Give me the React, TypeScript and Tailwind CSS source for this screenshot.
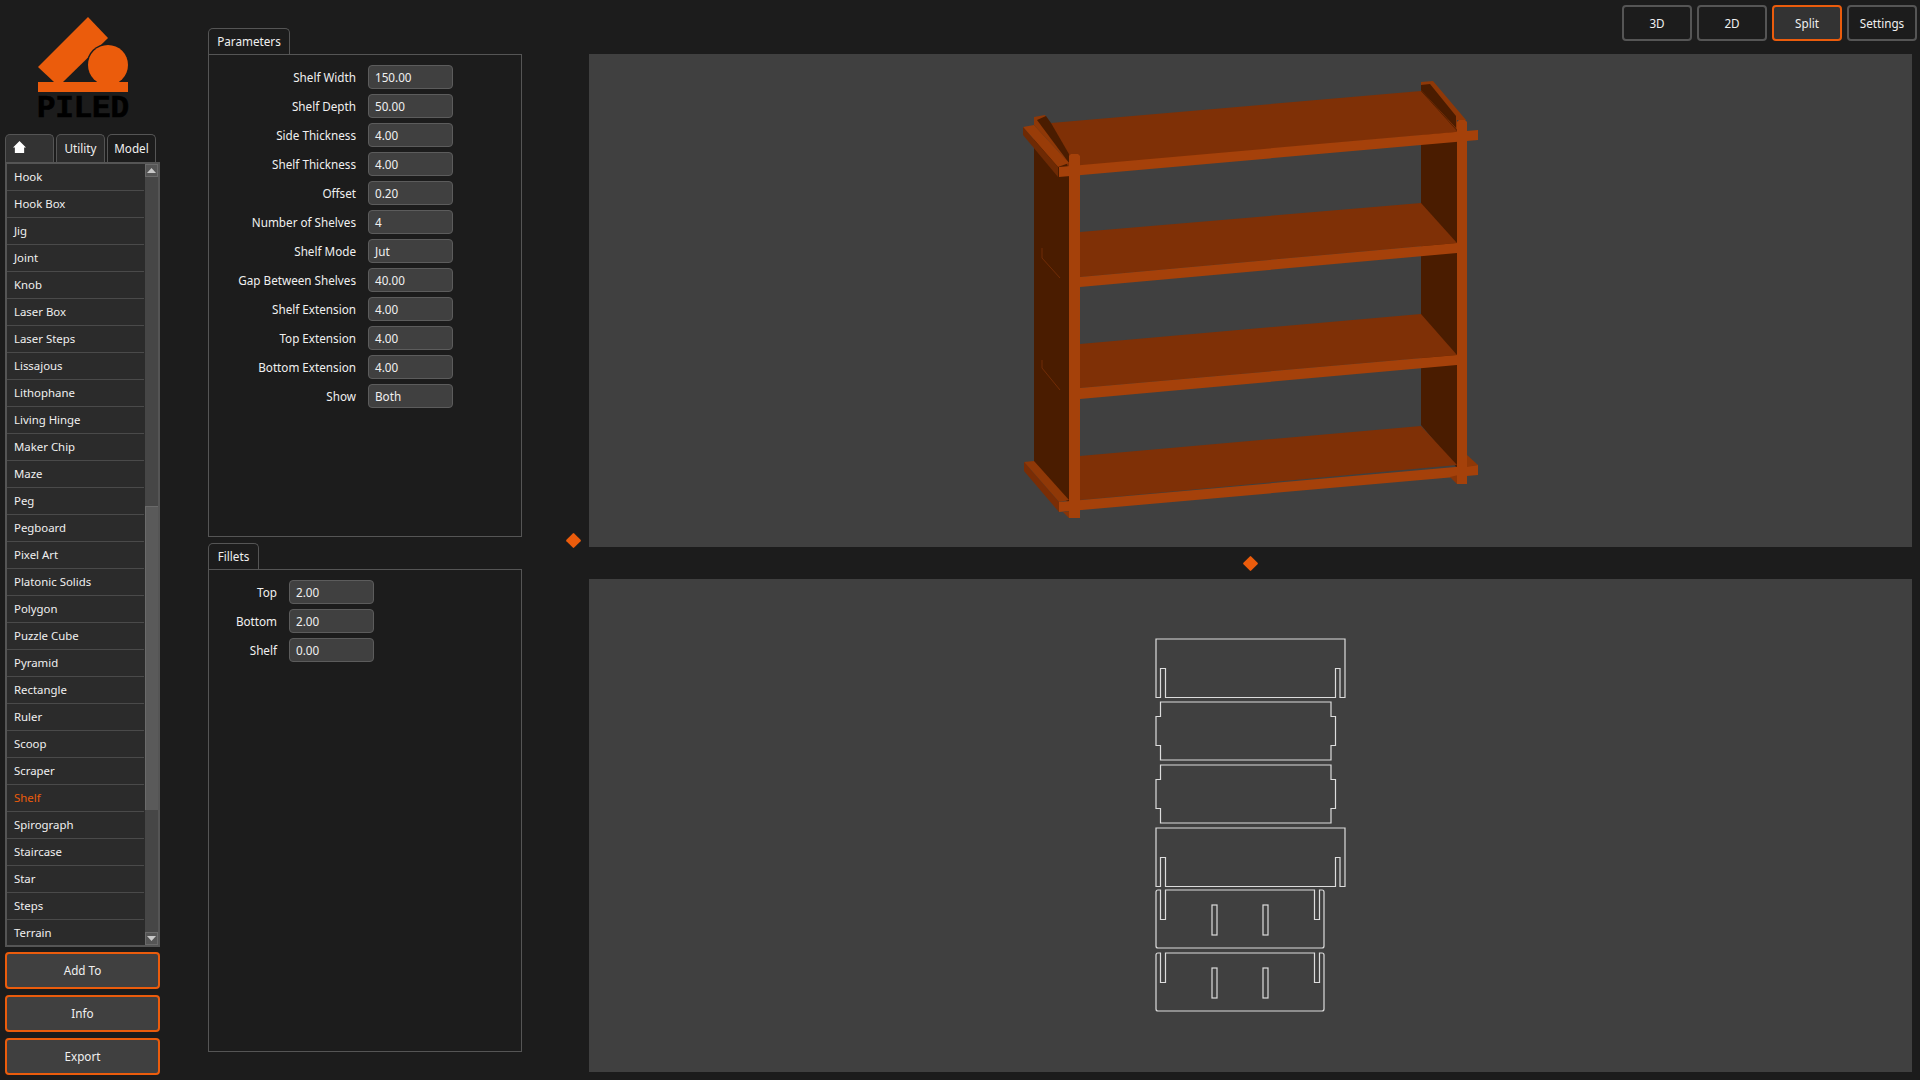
const items = [
  'Hook', 'Hook Box', 'Jig', 'Joint', 'Knob', 'Laser Box', 'Laser Steps', 'Lissajous', 'Lithophane', 'Living Hinge',
  'Maker Chip', 'Maze', 'Peg', 'Pegboard', 'Pixel Art', 'Platonic Solids', 'Polygon', 'Puzzle Cube', 'Pyramid',
  'Rectangle', 'Ruler', 'Scoop', 'Scraper', 'Shelf', 'Spirograph', 'Staircase', 'Star', 'Steps', 'Terrain',
];

const params = [
  ['Shelf Width', '150.00'], ['Shelf Depth', '50.00'], ['Side Thickness', '4.00'], ['Shelf Thickness', '4.00'],
  ['Offset', '0.20'], ['Number of Shelves', '4'], ['Shelf Mode', 'Jut'], ['Gap Between Shelves', '40.00'],
  ['Shelf Extension', '4.00'], ['Top Extension', '4.00'], ['Bottom Extension', '4.00'], ['Show', 'Both'],
];

const fillets = [['Top', '2.00'], ['Bottom', '2.00'], ['Shelf', '0.00']];

const TOP = '#7f3006';
const FRONT = '#a5410a';
const DARK = '#4a1c00';
const MID = '#8f3807';

function Logo() {
  return (
    <svg width="165" height="134" viewBox="0 0 165 134" className="block">
      <polygon points="88,17 108,38 63,82 54,82 38,67" fill="#eb5c0c" />
      <circle cx="108" cy="65" r="21.5" fill="#1c1c1c" />
      <circle cx="108" cy="65" r="20" fill="#eb5c0c" />
      <rect x="38" y="82" width="90" height="10" fill="#eb5c0c" />
      <text x="37" y="117" fill="#000000" stroke="#000000" strokeWidth="0.6" fontFamily="'Liberation Mono', monospace" fontWeight="700" fontSize="31" textLength="92">PILED</text>
    </svg>
  );
}

function Arrow({ up }: { up: boolean }) {
  return (
    <div className="w-[13px] h-[13px] shrink-0 bg-[#555555] border border-[#6a6a6a] flex items-center justify-center">
      <svg width="9" height="5" viewBox="0 0 9 5">
        <polygon points={up ? '4.5,0 9,5 0,5' : '0,0 9,0 4.5,5'} fill="#c8c8c8" />
      </svg>
    </div>
  );
}

function Sidebar() {
  return (
    <div className="w-[208px] shrink-0 pl-[5px] flex flex-col">
      <div className="h-[134px] -ml-[5px]"><Logo /></div>
      <div className="flex h-[28px]">
        <div className="w-[49px] mr-[2px] rounded-t-[5px] border border-b-0 border-[#555555] bg-[#333333] pl-[7px] pt-[6px]">
          <svg width="13" height="13" viewBox="0 0 14 14">
            <polygon points="7,0 14,7 12,7 12,13 2,13 2,7 0,7" fill="#ffffff" />
          </svg>
        </div>
        <div className="w-[49px] mr-[2px] rounded-t-[5px] border border-b-0 border-[#555555] bg-[#2b2b2b] flex items-center justify-center">Utility</div>
        <div className="w-[49px] rounded-t-[5px] border border-b-0 border-[#555555] bg-[#1c1c1c] flex items-center justify-center">Model</div>
      </div>
      <div className="w-[155px] h-[785px] border-2 border-[#555555] bg-[#2b2b2b] flex overflow-hidden">
        <div className="w-[137px] mr-[1px] text-[11.4px]">
          {items.map((name) => (
            <div
              key={name}
              className={`h-[27px] pl-[7px] pb-[1px] flex items-center border-b border-[#4a4a4a] ${name === 'Shelf' ? 'text-[#eb5c0c]' : ''}`}
            >
              {name}
            </div>
          ))}
        </div>
        <div className="w-[13px] bg-[#464646] flex flex-col">
          <Arrow up />
          <div className="h-[329px] shrink-0" />
          <div className="w-[13px] h-[304px] shrink-0 bg-[#5a5a5a] border-t border-l border-[#6a6a6a]" />
          <div className="flex-1" />
          <Arrow up={false} />
        </div>
      </div>
      <div className="w-[155px] mt-[5px] flex flex-col gap-[6px]">
        {['Add To', 'Info', 'Export'].map((b) => (
          <div key={b} className="h-[37px] rounded-[4px] border-2 border-[#eb5c0c] bg-[#404040] flex items-center justify-center">{b}</div>
        ))}
      </div>
    </div>
  );
}

function Field({ label, value, labelWidth }: { label: string; value: string; labelWidth: string }) {
  return (
    <div className="flex items-center h-[24px] mb-[5px]">
      <div className={`${labelWidth} pt-[1px] text-right whitespace-nowrap`}>{label}</div>
      <div className="w-[85px] h-[24px] ml-[12px] pt-[1px] rounded-[4px] border border-[#5c5c5c] bg-[#404040] pl-[6px] flex items-center">{value}</div>
    </div>
  );
}

function Group({ title, tabWidth, children }: { title: string; tabWidth: string; children: React.ReactNode }) {
  return (
    <div>
      <div className={`${tabWidth} h-[26px] rounded-t-[5px] border border-b-0 border-[#555555] flex items-center justify-center`}>{title}</div>
      <div className="w-[314px] h-[483px] border border-[#555555] pt-[10px]">{children}</div>
    </div>
  );
}

function Shelf3D() {
  const poly = (points: string, fill: string) => <polygon points={points} fill={fill} />;
  return (
    <svg viewBox="589 54 1323 493" className="block w-full h-full">
      {poly('1034,125 1070,165 1070,505 1034,462', DARK)}
      {poly('1421,85 1457,125 1457,468 1421,425', DARK)}

      {poly('1080,456 1421,426 1457,465 1080,500', TOP)}
      {poly('1059,502 1478,465 1478,475 1059,512', FRONT)}
      {poly('1024,462 1034,461 1069,500 1059,502', MID)}
      {poly('1024,462 1059,502 1059,512 1024,471', '#7a2d05')}
      {poly('1467,455 1478,465 1467,467', MID)}
      {poly('1063,512 1069,518 1080,518 1080,510', '#8a3507')}
      {poly('1450,477 1457,484 1467,484 1467,473', '#8a3507')}

      {poly('1080,344 1421,314 1457,355 1080,388', TOP)}
      {poly('1080,388 1457,355 1457,365 1080,399', FRONT)}
      {poly('1080,232 1421,203 1457,243 1080,277', TOP)}
      {poly('1080,277 1457,243 1457,253 1080,287', FRONT)}

      {poly('1051,123 1421,91 1458,132 1068,167', TOP)}
      {poly('1034,117 1045,115 1069,154 1069,163 1034,125', MID)}
      {poly('1037,120 1046,116 1051,123 1069,154 1069,163', DARK)}
      {poly('1023,127 1034,125 1069,163 1058,167', '#993c08')}
      {poly('1023,127 1058,167 1058,177 1023,135', '#6e2a04')}
      {poly('1421,82 1433,81 1466,120 1457,120 1457,130 1421,90', MID)}
      {poly('1421,85 1430,84 1456,116 1456,128 1421,90', DARK)}
      {poly('1059,167 1478,130 1478,140 1059,177', FRONT)}

      {poly('1069,156 1071,154 1078,154 1080,156 1080,518 1069,518', FRONT)}
      {poly('1457,122 1459,120 1465,120 1467,122 1467,484 1457,484', FRONT)}

      <polyline points="1042,248 1042,258 1060,278" fill="none" stroke="#7a3008" strokeWidth="0.8" />
      <polyline points="1042,360 1042,368 1060,390" fill="none" stroke="#7a3008" strokeWidth="0.8" />
    </svg>
  );
}

function Slotted({ y }: { y: number }) {
  return (
    <path d={`M1156 ${y} H1345 V${y + 58.5} H1340 V${y + 29.5} H1335.5 V${y + 58.5} H1165.5 V${y + 29.5} H1160.5 V${y + 58.5} H1156 Z`} />
  );
}

function Notched({ y }: { y: number }) {
  return (
    <path d={`M1160.5 ${y} H1331 V${y + 14.5} H1335.5 V${y + 43.5} H1331 V${y + 58} H1160.5 V${y + 43.5} H1156 V${y + 14.5} H1160.5 Z`} />
  );
}

function Side({ y }: { y: number }) {
  return (
    <>
      <path
        d={`M1158 ${y} H1160.5 V${y + 29.5} H1165.5 V${y} H1314.5 V${y + 29.5} H1319.5 V${y} H1322 Q1324 ${y} 1324 ${y + 2} V${y + 56} Q1324 ${y + 58} 1322 ${y + 58} H1158 Q1156 ${y + 58} 1156 ${y + 56} V${y + 2} Q1156 ${y} 1158 ${y} Z`}
      />
      <rect x="1212" y={y + 15} width="5" height="30" />
      <rect x="1263" y={y + 15} width="5" height="30" />
    </>
  );
}

function Shelf2D() {
  return (
    <svg viewBox="589 579 1323 493" className="block w-full h-full">
      <g fill="none" stroke="#dcdcdc" strokeWidth="1.2">
        <Slotted y={639} />
        <Notched y={702} />
        <Notched y={765} />
        <Slotted y={828} />
        <Side y={890} />
        <Side y={953} />
      </g>
    </svg>
  );
}

function Diamond() {
  return <div className="w-[11px] h-[11px] rotate-45 rounded-[1px] bg-[#eb5c0c]" />;
}

export default function App() {
  return (
    <div className="w-[1920px] h-[1080px] overflow-hidden flex bg-[#1c1c1c] text-[#f0f0f0] text-[11.7px] font-['Noto_Sans',sans-serif]">
      <Sidebar />
      <div className="w-[314px] shrink-0 pt-[28px] flex flex-col gap-[6px]">
        <Group title="Parameters" tabWidth="w-[82px]">
          {params.map(([l, v]) => <Field key={l} label={l} value={v} labelWidth="w-[147px]" />)}
        </Group>
        <Group title="Fillets" tabWidth="w-[51px]">
          {fillets.map(([l, v]) => <Field key={l} label={l} value={v} labelWidth="w-[68px]" />)}
        </Group>
      </div>
      <div className="w-[67px] shrink-0 pt-[535px] pl-[46px]"><Diamond /></div>
      <div className="flex-1 flex flex-col">
        <div className="h-[54px] flex justify-end gap-[5px] pt-[5px] pr-[3px]">
          {['3D', '2D', 'Split', 'Settings'].map((b) => (
            <div
              key={b}
              className={`w-[70px] h-[36px] pt-[1px] rounded-[4px] border-2 flex items-center justify-center ${b === 'Split' ? 'border-[#eb5c0c] bg-[#333333]' : 'border-[#555555]'}`}
            >
              {b}
            </div>
          ))}
        </div>
        <div className="w-[1323px] h-[493px] bg-[#404040]"><Shelf3D /></div>
        <div className="w-[1323px] h-[32px] flex items-center justify-center"><Diamond /></div>
        <div className="w-[1323px] h-[493px] bg-[#404040]"><Shelf2D /></div>
      </div>
    </div>
  );
}
